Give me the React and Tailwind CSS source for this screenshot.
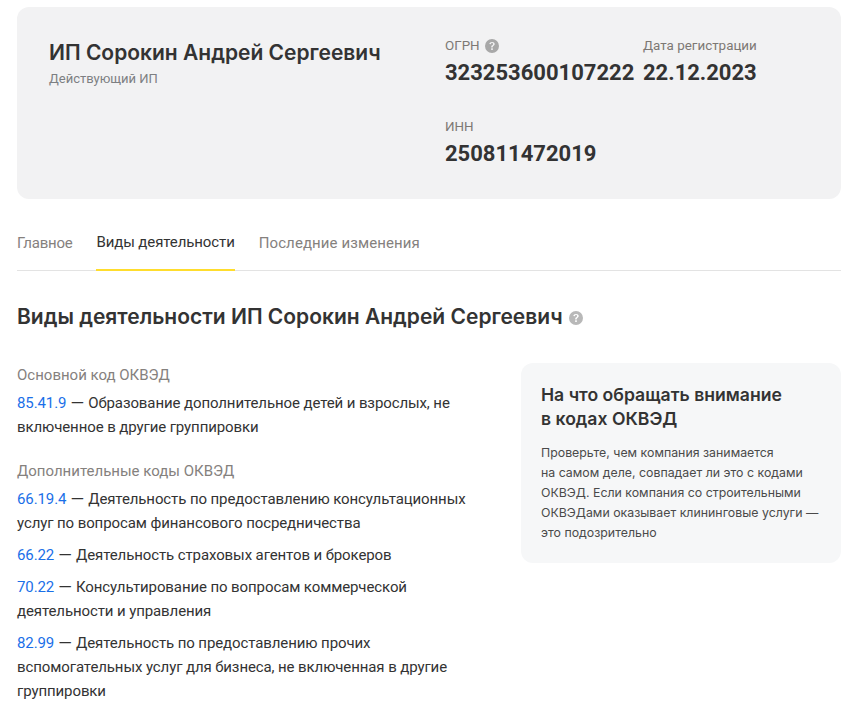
import { useState } from "react";

const HINT =
  "M8 1a7 7 0 1 0 0 14A7 7 0 0 0 8 1Zm-.8 10.9v-1.6h1.6v1.6H7.2Zm2.9-4.6c-.3.4-.7.7-1 1-.3.3-.4.5-.4 1.1H7.2c0-1 .2-1.4.7-1.9.3-.3.7-.5.9-.8.2-.2.3-.4.3-.7 0-.5-.5-.9-1.1-.9-.7 0-1.1.4-1.2 1.1l-1.5-.2C5.5 4.7 6.6 3.9 8 3.9c1.6 0 2.7.9 2.7 2.2 0 .5-.2.9-.6 1.2Z";

const TABS = [
  { name: "Главное", tracking: "tracking-[-0.25px]" },
  { name: "Виды деятельности", tracking: "tracking-[-0.1px]" },
  { name: "Последние изменения", tracking: "tracking-[0.1px]" },
];

function HintIcon({ className }) {
  return (
    <svg viewBox="1 1 14 14" className={className} fill="currentColor">
      <path fillRule="evenodd" d={HINT} />
    </svg>
  );
}

function Requisite({ label, value, hint, className }) {
  return (
    <div className={className}>
      <div className="flex h-[20px] items-center gap-[5px] text-[13.4px] leading-[20px] text-[#7d7874]">
        {label}
        {hint && <HintIcon className="h-[14px] w-[14px] text-[#a8a8a8]" />}
      </div>
      <div className="mt-[3px] text-[22px] leading-[28px] font-bold text-[#333]">{value}</div>
    </div>
  );
}

function Okved({ code, text }) {
  return (
    <p className="text-[15px] leading-[24px] tracking-[-0.1px] text-[#333]">
      <a href="#" className="text-[#1a6fe8]">
        {code}
      </a>{" "}
      <span className="relative top-[1px] mx-[0.5px] text-[17.5px] leading-[0]">—</span> {text}
    </p>
  );
}

export default function App() {
  const [tab, setTab] = useState("Виды деятельности");

  return (
    <div className="h-[709px] overflow-hidden bg-white px-[17px] pt-[7px] pr-[8px] font-['Roboto',sans-serif]">
      <section className="flex h-[192px] rounded-[12px] bg-[#f2f2f3]">
        <div className="w-[428px] pt-[32px] pl-[32px]">
          <h1 className="font-['Inter',sans-serif] text-[21px] leading-[28px] font-semibold text-[#333]">
            ИП Сорокин Андрей Сергеевич
          </h1>
          <p className="mt-[2px] text-[13px] leading-[20px] text-[#7d7f82]">Действующий ИП</p>
        </div>
        <div className="pt-[29px]">
          <div className="flex">
            <Requisite className="w-[198px]" label="ОГРН" value="323253600107222" hint />
            <Requisite label="Дата регистрации" value="22.12.2023" />
          </div>
          <Requisite className="mt-[30px]" label="ИНН" value="250811472019" />
        </div>
      </section>

      <nav className="mt-[24px] flex h-[48px] gap-[24px] border-b border-[#e3e3e3]">
        {TABS.map(({ name, tracking }) => (
          <button
            key={name}
            type="button"
            onClick={() => setTab(name)}
            className={`-mb-px h-[48px] pb-[7px] text-[15px] ${tracking} ${
              name === tab ? "border-b-2 border-[#ffdd2d] text-[#333]" : "text-[#85817e]"
            }`}
          >
            {name}
          </button>
        ))}
      </nav>

      <h2 className="mt-[30px] flex items-center gap-[6px] font-['Inter',sans-serif] text-[21px] leading-[32px] font-semibold text-[#333]">
        Виды деятельности ИП Сорокин Андрей Сергеевич
        <HintIcon className="mt-[1px] h-[14px] w-[14px] text-[#b8b8b8]" />
      </h2>

      <div className="mt-[28px] flex">
        <div className="w-[460px]">
          <h3 className="mt-[2px] mb-[4px] text-[15px] leading-[24px] font-normal text-[#85817e]">Основной код ОКВЭД</h3>
          <Okved code="85.41.9" text="Образование дополнительное детей и взрослых, не включенное в другие группировки" />
          <h3 className="mt-[20px] mb-[4px] text-[15px] leading-[24px] font-normal text-[#85817e]">Дополнительные коды ОКВЭД</h3>
          <Okved code="66.19.4" text="Деятельность по предоставлению консультационных услуг по вопросам финансового посредничества" />
          <div className="mt-[8px]">
            <Okved code="66.22" text="Деятельность страховых агентов и брокеров" />
          </div>
          <div className="mt-[8px]">
            <Okved code="70.22" text="Консультирование по вопросам коммерческой деятельности и управления" />
          </div>
          <div className="mt-[8px]">
            <Okved code="82.99" text="Деятельность по предоставлению прочих вспомогательных услуг для бизнеса, не включенная в другие группировки" />
          </div>
        </div>
        <aside className="mt-[2px] ml-[44px] h-[200px] w-[320px] rounded-[12px] bg-[#f6f7f8] px-[20px] pt-[20px] font-['Inter',sans-serif]">
          <h4 className="text-[17.6px] leading-[24px] font-semibold text-[#333]">
            На что обращать внимание
            <br />в кодах ОКВЭД
          </h4>
          <p className="mt-[12px] text-[12.35px] leading-[20px] text-[#4a4a4a]">
            Проверьте, чем компания занимается
            <br />
            на самом деле, совпадает ли это с кодами
            <br />
            ОКВЭД. Если компания со строительными
            <br />
            ОКВЭДами оказывает клининговые услуги —
            <br />
            это подозрительно
          </p>
        </aside>
      </div>
    </div>
  );
}
